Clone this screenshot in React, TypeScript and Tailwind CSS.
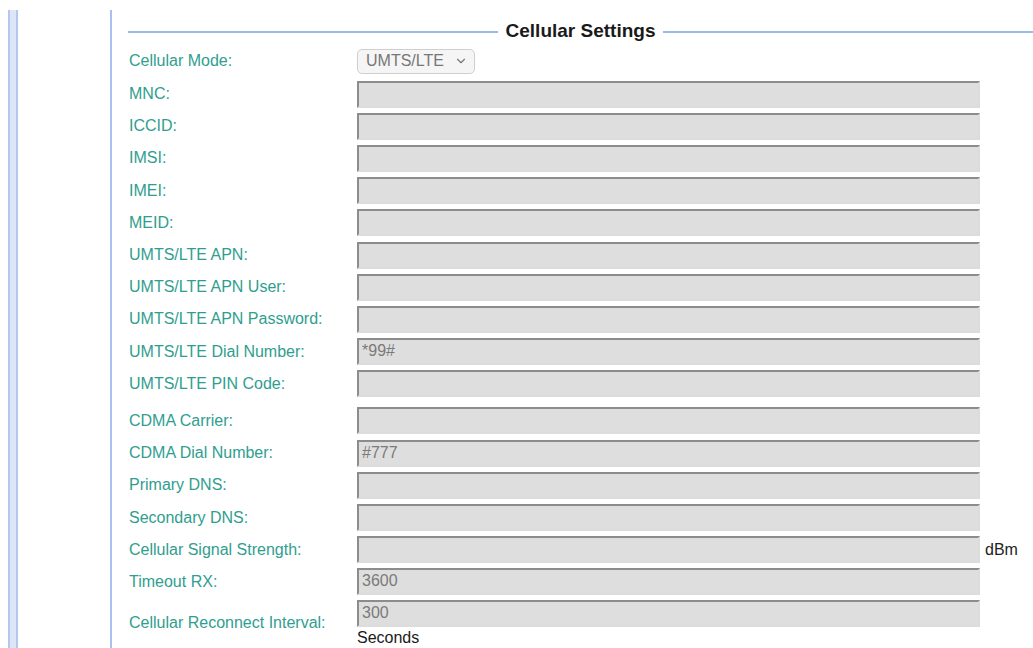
import React from "react";
import { ChevronDown } from "lucide-react";

type Field = { label: string; value?: string; unit?: string };

const mobileFields: Field[] = [
  { label: "MNC:" },
  { label: "ICCID:" },
  { label: "IMSI:" },
  { label: "IMEI:" },
  { label: "MEID:" },
  { label: "UMTS/LTE APN:" },
  { label: "UMTS/LTE APN User:" },
  { label: "UMTS/LTE APN Password:" },
  { label: "UMTS/LTE Dial Number:", value: "*99#" },
  { label: "UMTS/LTE PIN Code:" },
];

const cdmaFields: Field[] = [
  { label: "CDMA Carrier:" },
  { label: "CDMA Dial Number:", value: "#777" },
  { label: "Primary DNS:" },
  { label: "Secondary DNS:" },
  { label: "Cellular Signal Strength:", unit: "dBm" },
  { label: "Timeout RX:", value: "3600" },
];

const Label = ({ children }: { children: React.ReactNode }) => (
  <div className="w-[228px] shrink-0 text-[16px] text-[#2f9e8f]">{children}</div>
);

const Box = ({ value }: { value?: string }) => (
  <div className="h-[27px] w-[623px] shrink-0 border-2 border-t-[#8c8c8c] border-l-[#8c8c8c] border-r-[#dcdcdc] border-b-[#dcdcdc] bg-[#dedede] px-[3px] text-[16px] leading-[22px] text-[#7a7a7a]">
    {value}
  </div>
);

const Row = ({ field }: { field: Field }) => (
  <div className="flex h-[32.2px] items-center">
    <Label>{field.label}</Label>
    <Box value={field.value} />
    {field.unit && <span className="ml-[5px] text-[16px] text-[#222]">{field.unit}</span>}
  </div>
);

const App = () => {
  return (
    <div className="flex h-[648px] w-[1033px] overflow-hidden bg-white pt-[10px] font-['Liberation_Sans',Arial,sans-serif]">
      {/* left nav rail */}
      <div className="w-[110px] shrink-0 pl-[8px]">
        <div className="h-full w-[10px] border-x-2 border-[#b4c8ee] bg-[#dce6f8]"></div>
      </div>

      <div className="flex-1 border-l-2 border-[#a9c1ee] pl-[17px]">
        {/* section title */}
        <div className="flex h-[35px] items-center pt-[8px] -ml-px">
          <div className="h-[2px] flex-1 bg-[#9bb8e8]"></div>
          <span className="px-[8px] text-[19px] font-bold text-[#1a1a1a]">Cellular Settings</span>
          <div className="h-[2px] flex-1 bg-[#9bb8e8]"></div>
        </div>

        <div className="flex h-[32px] items-center">
          <Label>Cellular Mode:</Label>
          <div className="flex h-[25px] w-[118px] items-center justify-between rounded-[5px] border border-[#cfcfcf] bg-[#f5f5f5] pl-[8px] pr-[6px] text-[16px] text-[#777]">
            <span>UMTS/LTE</span>
            <ChevronDown size={14} strokeWidth={2} />
          </div>
        </div>

        <div className="mt-px">
          {mobileFields.map((f) => (
            <Row key={f.label} field={f} />
          ))}
        </div>

        <div className="mt-[5px]">
          {cdmaFields.map((f) => (
            <Row key={f.label} field={f} />
          ))}
        </div>

        <div className="mt-px flex items-center">
          <Label>Cellular Reconnect Interval:</Label>
          <div className="flex flex-col pt-px">
            <Box value="300" />
            <span className="pt-px text-[16px] leading-[19px] text-[#1a1a1a]">Seconds</span>
          </div>
        </div>
      </div>
    </div>
  );
};

export default App;
